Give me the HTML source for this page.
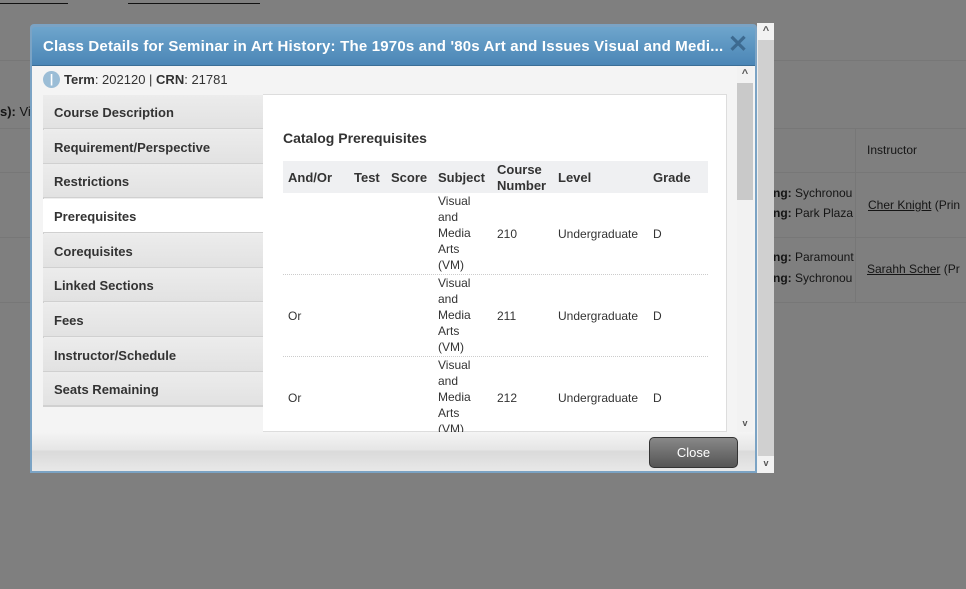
<!DOCTYPE html>
<html><head><style>
*{margin:0;padding:0;box-sizing:border-box}
body{width:966px;height:589px;background:#7f7f7f;font-family:"Liberation Sans",sans-serif;position:relative;overflow:hidden;font-size:13px;color:#1c1c1c}
.a{position:absolute}
.bgt{color:#151515}
.tab{position:absolute;left:43px;width:220px;height:34px;background:linear-gradient(#ececec,#e2e2e2);border-bottom:1px solid #d0d0d0;font-weight:bold;font-size:13px;color:#333;padding:10px 0 0 11px}
.th{position:absolute;font-weight:bold;font-size:13px;color:#333}
.td{position:absolute;font-size:12px;color:#333;line-height:16px}
.dot{position:absolute;left:283px;width:425px;border-top:1px dotted #ccc}
.chev{position:absolute;width:16px;text-align:center;font-size:11px;color:#555;font-weight:bold}
</style></head><body>
<div class="a" style="left:0;top:-8px;width:68px;border-bottom:1px solid #111;height:12px"></div>
<div class="a" style="left:128px;top:-8px;width:132px;border-bottom:1px solid #111;height:12px"></div>
<div class="a" style="left:0;top:60px;width:966px;border-top:1px solid #777"></div>
<div class="a bgt" style="left:0;top:104px;font-weight:bold">s): <span style="font-weight:normal">Vis</span></div>
<div class="a" style="left:0;top:128px;width:966px;border-top:1px solid #777"></div>
<div class="a" style="left:0;top:172px;width:966px;border-top:1px solid #777"></div>
<div class="a" style="left:0;top:237px;width:966px;border-top:1px solid #777"></div>
<div class="a" style="left:0;top:302px;width:966px;border-top:1px solid #777"></div>
<div class="a" style="left:855px;top:128px;height:174px;border-left:1px solid #777"></div>
<div class="a bgt" style="left:867px;top:143px;font-size:12px">Instructor</div>
<div class="a bgt" style="left:773px;top:186px;font-size:12px"><b>ng:</b> Sychronou</div>
<div class="a bgt" style="left:773px;top:206px;font-size:12px"><b>ng:</b> Park Plaza</div>
<div class="a bgt" style="left:868px;top:198px;font-size:12px"><u>Cher Knight</u> (Prin</div>
<div class="a bgt" style="left:773px;top:250px;font-size:12px"><b>ng:</b> Paramount</div>
<div class="a bgt" style="left:773px;top:271px;font-size:12px"><b>ng:</b> Sychronou</div>
<div class="a bgt" style="left:867px;top:262px;font-size:12px"><u>Sarahh Scher</u> (Pr</div>
<div class="a" style="left:757px;top:23px;width:17px;height:450px;background:#d0d0d0;border-left:1px solid #eee"></div>
<div class="a" style="left:757px;top:23px;width:17px;height:17px;background:#f2f2f2"></div>
<div class="chev" style="left:758px;top:25px">&#94;</div>
<div class="a" style="left:757px;top:456px;width:17px;height:17px;background:#f2f2f2"></div>
<div class="chev" style="left:758px;top:458px;font-size:9px">v</div>
<div class="a" style="left:30px;top:24px;width:727px;height:449px;background:#7ba3c4;border-radius:4px 4px 0 0"></div>
<div class="a" style="left:32px;top:27px;width:723px;height:39px;background:linear-gradient(#6ea5cc,#4b86b6);border-radius:3px 3px 0 0;border-bottom:1px solid #3b6e96"></div>
<div class="a" style="left:43px;top:38px;color:#fff;font-weight:bold;font-size:15px;letter-spacing:0.2px;white-space:nowrap">Class Details for Seminar in Art History: The 1970s and '80s Art and Issues Visual and Medi...</div>
<div class="a" style="left:728px;top:30px;color:#3d6a90;font-weight:bold;font-size:24px">&#10005;</div>
<div class="a" style="left:32px;top:66px;width:723px;height:405px;background:#f4f4f4"></div>
<div class="a" style="left:43px;top:71px;width:17px;height:17px;border-radius:50%;background:#9bbdd6;color:#fff;font-weight:bold;text-align:center;font-size:12px;line-height:17px">|</div>
<div class="a" style="left:64px;top:72px;font-size:13px;color:#333"><b>Term</b>: 202120 | <b>CRN</b>: 21781</div>
<div class="a" style="left:43px;top:95px;width:221px;height:312px;border:1px solid #d0d0d0;background:#eee"></div>
<div class="tab" style="top:95px">Course Description</div>
<div class="tab" style="top:130px">Requirement/Perspective</div>
<div class="tab" style="top:164px">Restrictions</div>
<div class="tab" style="top:199px;background:#fff;width:222px">Prerequisites</div>
<div class="tab" style="top:234px">Corequisites</div>
<div class="tab" style="top:268px">Linked Sections</div>
<div class="tab" style="top:303px">Fees</div>
<div class="tab" style="top:338px">Instructor/Schedule</div>
<div class="tab" style="top:372px">Seats Remaining</div>
<div class="a" style="left:263px;top:94px;width:464px;height:338px;background:#fff;border:1px solid #ddd;border-left:none;overflow:hidden"></div>
<div class="a" style="left:283px;top:130px;font-weight:bold;font-size:14px;color:#333">Catalog Prerequisites</div>
<div class="a" style="left:283px;top:161px;width:425px;height:32px;background:#eff0f2"></div>
<div class="th" style="left:288px;top:170px">And/Or</div>
<div class="th" style="left:354px;top:170px">Test</div>
<div class="th" style="left:391px;top:170px">Score</div>
<div class="th" style="left:438px;top:170px">Subject</div>
<div class="th" style="left:497px;top:162px;line-height:16px">Course<br>Number</div>
<div class="th" style="left:558px;top:170px">Level</div>
<div class="th" style="left:653px;top:170px">Grade</div>
<div class="a" style="left:263px;top:193px;width:464px;height:239px;overflow:hidden">
<div class="td" style="left:175px;top:0">Visual<br>and<br>Media<br>Arts<br>(VM)</div>
<div class="td" style="left:234px;top:33px">210</div><div class="td" style="left:295px;top:33px">Undergraduate</div><div class="td" style="left:390px;top:33px">D</div>
<div class="dot" style="left:20px;top:81px"></div>
<div class="td" style="left:25px;top:115px">Or</div>
<div class="td" style="left:175px;top:82px">Visual<br>and<br>Media<br>Arts<br>(VM)</div>
<div class="td" style="left:234px;top:115px">211</div><div class="td" style="left:295px;top:115px">Undergraduate</div><div class="td" style="left:390px;top:115px">D</div>
<div class="dot" style="left:20px;top:163px"></div>
<div class="td" style="left:25px;top:197px">Or</div>
<div class="td" style="left:175px;top:164px">Visual<br>and<br>Media<br>Arts<br>(VM)</div>
<div class="td" style="left:234px;top:197px">212</div><div class="td" style="left:295px;top:197px">Undergraduate</div><div class="td" style="left:390px;top:197px">D</div>
</div>
<div class="a" style="left:737px;top:66px;width:16px;height:366px;background:#f2f2f2"></div>
<div class="a" style="left:737px;top:83px;width:16px;height:117px;background:#c9c9c9"></div>
<div class="chev" style="left:737px;top:68px">&#94;</div>
<div class="chev" style="left:737px;top:418px;font-size:9px">v</div>
<div class="a" style="left:32px;top:432px;width:723px;height:39px;background:linear-gradient(#f4f4f4,#e6e6e6 45%,#dadada 50%,#e8e8e8)"></div>
<div class="a" style="left:649px;top:437px;width:89px;height:31px;border-radius:5px;background:linear-gradient(#888,#555);border:1px solid #333;color:#fff;text-align:center;line-height:29px;font-size:13px">Close</div>
</body></html>
